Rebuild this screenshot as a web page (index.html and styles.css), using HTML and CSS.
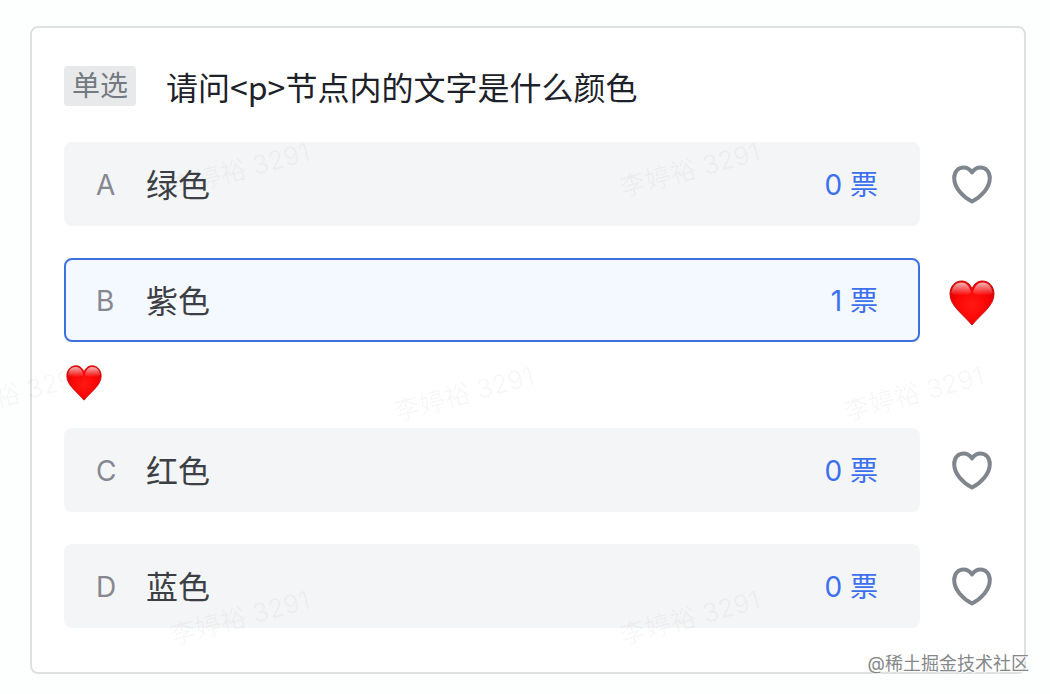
FILE: index.html
```
<!DOCTYPE html>
<html lang="zh-CN">
<head>
<meta charset="utf-8">
<meta name="viewport" content="width=device-width, initial-scale=1">
<title>投票</title>
<link rel="stylesheet" href="styles.css">
</head>
<body>

<svg class="defs" width="0" height="0" aria-hidden="true">
  <defs>
    <radialGradient id="red" cx="0.5" cy="0.55" r="0.6">
      <stop offset="0" stop-color="#ff1a12"/>
      <stop offset="0.6" stop-color="#fb0505"/>
      <stop offset="1" stop-color="#e00000"/>
    </radialGradient>
    <linearGradient id="shine" x1="0" y1="0" x2="0" y2="1">
      <stop offset="0" stop-color="#fff" stop-opacity="0.7"/>
      <stop offset="1" stop-color="#fff" stop-opacity="0"/>
    </linearGradient>
    <symbol id="heart-line" viewBox="0 0 40 40">
      <path d="M20 8.5C17.7 5 14.6 3.5 11.5 3.5C6 3.5 2.200 8 2.200 14C2.200 24 11 33 20 37.500C29 33 37.800 24 37.800 14C37.800 8 34 3.500 28.500 3.500C25.400 3.500 22.300 5 20 8.500Z" fill="none" stroke="#80868e" stroke-width="4" stroke-linejoin="round"/>
    </symbol>
    <symbol id="heart-red" viewBox="0 0 46 46">
      <path d="M23 9C21 3.500 17 1 12.500 1C6 1 1 6.500 1 14C1 26 14 34 23 45C32 34 45 26 45 14C45 6.500 40 1 33.500 1C29 1 25 3.500 23 9Z" fill="url(#red)" stroke="#c90d0d" stroke-width="1"/>
      <path d="M22 12C20 5.500 17 2.500 12.500 2.500C6.500 2.500 3 7 2.500 13C3 16 21 17 22 12Z" fill="url(#shine)"/>
      <path d="M24 12C26 5.500 29 2.500 33.500 2.500C39.500 2.500 43 7 43.500 13C43 16 25 17 24 12Z" fill="url(#shine)"/>
    </symbol>
  </defs>
</svg>

<form class="card">
  <div class="head">
    <span class="tag">单选</span>
    <h1 class="title">请问&lt;p&gt;节点内的文字是什么颜色</h1>
  </div>

  <div class="row">
    <label class="option">
      <input type="radio" name="vote" value="A">
      <span class="key">A</span>
      <span class="name">绿色</span>
      <span class="count">0 票</span>
    </label>
    <button type="button" class="like" aria-label="喜欢 A"><svg class="line"><use href="#heart-line"/></svg></button>
  </div>

  <div class="row">
    <label class="option">
      <input type="radio" name="vote" value="B" checked>
      <span class="key">B</span>
      <span class="name">紫色</span>
      <span class="count">1 票</span>
    </label>
    <button type="button" class="like" aria-label="取消喜欢 B"><svg class="full"><use href="#heart-red"/></svg></button>
  </div>
  <div class="likes"><svg><use href="#heart-red"/></svg></div>

  <div class="row">
    <label class="option">
      <input type="radio" name="vote" value="C">
      <span class="key">C</span>
      <span class="name">红色</span>
      <span class="count">0 票</span>
    </label>
    <button type="button" class="like" aria-label="喜欢 C"><svg class="line"><use href="#heart-line"/></svg></button>
  </div>

  <div class="row">
    <label class="option">
      <input type="radio" name="vote" value="D">
      <span class="key">D</span>
      <span class="name">蓝色</span>
      <span class="count">0 票</span>
    </label>
    <button type="button" class="like" aria-label="喜欢 D"><svg class="line"><use href="#heart-line"/></svg></button>
  </div>
</form>

<!-- page watermark -->
<div class="marks" aria-hidden="true">
  <span class="mark m1">李婷裕 3291</span>
  <span class="mark m2">李婷裕 3291</span>
  <span class="mark m3">李婷裕 3291</span>
  <span class="mark m4">李婷裕 3291</span>
  <span class="mark m5">李婷裕 3291</span>
  <span class="mark m6">李婷裕 3291</span>
  <span class="mark m7">李婷裕 3291</span>
</div>
<div class="source">@稀土掘金技术社区</div>

</body>
</html>
```
FILE: styles.css
```
* { box-sizing: border-box; }
body {
  position: relative;
  margin: 0;
  padding: 26px 24px 20px 30px;
  overflow-x: hidden;
  background: #fdfefe;
  color: #1d2129;
  font-family: Inter, "Noto Sans CJK SC", sans-serif;
}
.defs { position: absolute; }
.card {
  padding: 38px 32px 44px;
  border: 2px solid #dee0e1;
  border-radius: 8px;
  background: #fff;
}

.head { display: flex; align-items: center; gap: 30px; margin-bottom: 36px; }
.tag {
  padding: 0 8px;
  border-radius: 4px;
  background: #e8e9ea;
  color: #737a80;
  font-size: 28px;
  line-height: 40px;
}
.title {
  margin: 0;
  font-family: "Noto Sans CJK SC", sans-serif;
  font-size: 32px;
  font-weight: 400;
  line-height: 36px;
}

.row { display: flex; align-items: center; gap: 32px; }
.row + .row { margin-top: 32px; }
.option {
  position: relative;
  flex: 1;
  display: flex;
  align-items: center;
  height: 84px;
  padding: 0 40px 0 30px;
  border: 2px solid #f4f5f7;
  border-radius: 8px;
  background: #f4f5f7;
  cursor: pointer;
}
.option input { position: absolute; margin: 0; opacity: 0; }
.option:has(input:checked) { border-color: #3d70e0; background: #f4f8ff; }
.key { width: 50px; padding-top: 2px; color: #86888f; font-size: 28px; }
.name { flex: 1; padding-bottom: 2px; color: #3c3f44; font-size: 32px; }
.count { padding-bottom: 2px; color: #3c70ee; font-size: 28px; }

.like {
  display: flex;
  justify-content: center;
  width: 40px;
  padding: 0;
  border: 0;
  background: none;
  cursor: pointer;
}
.line { flex: none; width: 40px; height: 40px; }
.full { flex: none; width: 46px; height: 46px; margin-top: 5px; }
.likes { display: flex; align-items: center; height: 86px; padding: 0 2px 4px; }
.likes svg { width: 36px; height: 36px; }

.marks { position: absolute; inset: 0; overflow: hidden; pointer-events: none; }
.mark {
  position: absolute;
  color: rgba(0, 0, 0, 0.04);
  font-size: 26px;
  line-height: 32px;
  white-space: nowrap;
  transform: rotate(-15deg);
}
.m1 { left: 168px; top: 154px; }
.m2 { left: 618px; top: 154px; }
.m3 { left: -58px; top: 378px; }
.m4 { left: 392px; top: 378px; }
.m5 { left: 842px; top: 378px; }
.m6 { left: 168px; top: 602px; }
.m7 { left: 618px; top: 602px; }

.source {
  position: absolute;
  right: 21px;
  bottom: 18px;
  color: #85878a;
  font-size: 18px;
  line-height: 24px;
  text-shadow: 1px 1px 1px #fff;
}
```
